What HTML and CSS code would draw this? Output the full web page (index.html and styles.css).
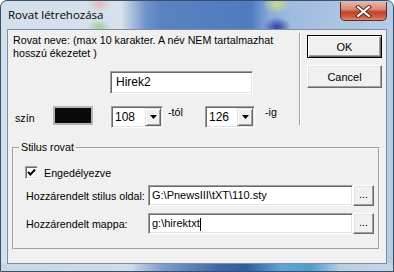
FILE: index.html
```html
<!DOCTYPE html>
<html>

<head>
    <title>Rovat létrehozása</title>
    <meta charset="utf-8">
    <link rel="stylesheet" href="styles.css">
</head>

<body>

    <div class="window">
        <div class="titlebar">
            <span class="title">Rovat létrehozása</span>
            <button class="close">
                <svg width="17" height="13" viewBox="0 0 17 13">
                    <path d="M3 2 L14 11 M14 2 L3 11" stroke="#5a2018" stroke-width="4" stroke-linecap="square" />
                    <path d="M3 2 L14 11 M14 2 L3 11" stroke="#ffffff" stroke-width="2" stroke-linecap="square" />
                </svg>
            </button>
        </div>

        <div class="client">
            <div class="top">
                <div class="main">
                    <p class="intro">Rovat neve: (max 10 karakter. A név NEM tartalmazhat<br>hosszú ékezetet )</p>
                    <div class="field name">Hirek2</div>

                    <div class="color-row">
                        <span class="lbl-szin">szín</span>
                        <span class="swatch"></span>
                        <div class="combo">
                            <span class="combo-text">108</span>
                            <span class="drop"><svg width="7" height="4" viewBox="0 0 7 4"><polygon points="0,0 7,0 3.5,4" fill="#000" /></svg></span>
                        </div>
                        <span class="suffix tol">-tól</span>
                        <div class="combo combo2">
                            <span class="combo-text">126</span>
                            <span class="drop"><svg width="7" height="4" viewBox="0 0 7 4"><polygon points="0,0 7,0 3.5,4" fill="#000" /></svg></span>
                        </div>
                        <span class="suffix ig">-ig</span>
                    </div>
                </div>

                <div class="sep"></div>

                <div class="buttons">
                    <button class="btn default">OK</button>
                    <button class="btn">Cancel</button>
                </div>
            </div>

            <div class="group">
                <span class="legend">Stilus rovat</span>

                <div class="check">
                    <span class="box">
                        <svg width="9" height="9" viewBox="0 0 9 9"><polyline points="1,4 3.5,6.5 8,1.5" fill="none" stroke="#000" stroke-width="2" /></svg>
                    </span>
                    <span>Engedélyezve</span>
                </div>

                <div class="row">
                    <span class="row-label">Hozzárendelt stilus oldal:</span>
                    <div class="field path">G:\PnewsIII\tXT\110.sty</div>
                    <button class="browse">...</button>
                </div>

                <div class="row">
                    <span class="row-label">Hozzárendelt mappa:</span>
                    <div class="field path">g:\hirektxt<span class="caret"></span></div>
                    <button class="browse">...</button>
                </div>
            </div>
        </div>
    </div>

</body></html>
```

FILE: styles.css
```css
body {
    margin: 0;
    background-color: #ffffff;
    font-family: "Liberation Sans", Arial, sans-serif;
    font-size: 10.7px;
    color: #000;
}

.window {
    width: 394px;
    height: 272px;
    box-sizing: border-box;
    border: 1px solid #3b4f69;
    border-radius: 7px 7px 0 0;
    padding: 0 6px 7px 6px;
    background:
        linear-gradient(to right, #c9d6e4 0, #cfdbe8 130px, #7f9fcf 160px, #3f6aaa 215px, #2f5c9c 245px, #5aa6d6 280px, #4f9ccf 310px, #b9cde3 340px, #c7d6e6 394px) bottom / 100% 8px no-repeat,
        radial-gradient(ellipse 12px 8px at 98px 3px, #e6b6b4, transparent),
        radial-gradient(ellipse 12px 8px at 98px 26px, #9fd09a, transparent),
        radial-gradient(ellipse 14px 10px at 276px 3px, #c9e08c, transparent),
        radial-gradient(ellipse 14px 10px at 276px 26px, #2c3fa8, transparent),
        linear-gradient(to right, #d3dfeb 0, #d6e1ec 120px, #6f93cb 145px, #5a82c2 160px, #4f7bbf 250px, #8aaad8 268px, #9fbbe0 290px, #acc4e2 340px, #b7cce5 394px);
}

.titlebar {
    height: 28px;
    display: flex;
    justify-content: space-between;
    align-items: flex-start;
}

.title {
    font-family: "Segoe UI", "Open Sans", sans-serif;
    font-size: 11.5px;
    margin: 6px 0 0 1px;
    color: #000;
}

.close {
    width: 47px;
    height: 19px;
    margin: 1px 0 0 0;
    padding: 0;
    border: 1px solid #5e2a24;
    border-top: none;
    border-radius: 0 0 5px 5px;
    background: linear-gradient(#eab3a2 0, #d98b78 40%, #c2432d 55%, #cf5a3f 80%, #e08a6a 100%);
    display: flex;
    align-items: center;
    justify-content: center;
}

.client {
    height: 233px;
    border: 1px solid #7d8ea3;
    background-color: #f0f0f0;
}

.top {
    display: flex;
    height: 117px;
}

.main {
    width: 291px;
}

.intro {
    margin: 4px 0 0 5px;
    line-height: 13px;
}

.field {
    background-color: #fff;
    box-sizing: border-box;
    border: 1px solid;
    border-color: #a0a0a0 #fff #fff #a0a0a0;
    box-shadow: inset 1px 1px 0 #696969, inset -1px -1px 0 #e3e3e3;
    white-space: nowrap;
    overflow: hidden;
}

.name {
    margin: 11px 0 0 102px;
    width: 143px;
    height: 23px;
    line-height: 21px;
    padding-left: 5px;
    font-size: 12px;
}

.color-row {
    display: flex;
    align-items: flex-start;
    margin-top: 12px;
}

.lbl-szin {
    width: 38px;
    margin: 6px 0 0 7px;
    line-height: 13px;
}

.swatch {
    width: 40px;
    height: 19px;
    box-sizing: border-box;
    background-color: #0a0a0a;
    border: 2px solid #b4b4b4;
}

.combo {
    display: flex;
    margin-left: 18px;
    width: 52px;
    height: 22px;
    box-sizing: border-box;
    background-color: #fff;
    border: 1px solid;
    border-color: #a0a0a0 #fff #fff #a0a0a0;
    box-shadow: inset 1px 1px 0 #696969, inset -1px -1px 0 #e3e3e3;
    padding: 1px;
}

.combo2 {
    margin-left: 0;
    width: 50px;
}

.combo-text {
    flex: 1;
    padding-left: 2px;
    line-height: 18px;
    font-size: 12px;
}

.drop {
    width: 16px;
    height: 18px;
    box-sizing: border-box;
    background-color: #f0f0f0;
    border: 1px solid;
    border-color: #e3e3e3 #696969 #696969 #e3e3e3;
    box-shadow: inset 1px 1px 0 #fff, inset -1px -1px 0 #a0a0a0;
    display: flex;
    align-items: center;
    justify-content: center;
}

.suffix {
    margin-left: 5px;
    line-height: 13px;
}

.tol {
    width: 37px;
}

.ig {
    margin-left: 10px;
}

.sep {
    width: 1px;
    height: 92px;
    margin-top: 3px;
    background-color: #a0a0a0;
    border-right: 1px solid #fff;
}

.buttons {
    margin-left: 6px;
    display: flex;
    flex-direction: column;
}

.btn {
    width: 75px;
    height: 23px;
    margin-top: 7px;
    padding: 0;
    font-family: "Liberation Sans", Arial, sans-serif;
    font-size: 11px;
    color: #000;
    background-color: #f0f0f0;
    border: 1px solid;
    border-color: #fff #696969 #696969 #fff;
    box-shadow: inset -1px -1px 0 #a0a0a0, inset 1px 1px 0 #e3e3e3;
}

.default {
    margin-top: 5px;
    border: 1px solid #000;
    box-shadow: inset 1px 1px 0 #fff, inset -1px -1px 0 #696969, inset -2px -2px 0 #a0a0a0;
}

/* group box, legend sits over the top border */
.group {
    position: relative;
    margin-left: 4px;
    width: 368px;
    height: 103px;
    box-sizing: border-box;
    border: 2px groove #f4f4f4;
    padding: 17px 0 0 12px;
}

.legend {
    position: absolute;
    top: -8px;
    left: 5px;
    padding: 0 2px;
    line-height: 13px;
    background-color: #f0f0f0;
}

.check {
    display: flex;
    align-items: center;
    height: 13px;
}

.box {
    width: 13px;
    height: 13px;
    box-sizing: border-box;
    background-color: #fff;
    border: 1px solid;
    border-color: #a0a0a0 #fff #fff #a0a0a0;
    box-shadow: inset 1px 1px 0 #696969, inset -1px -1px 0 #e3e3e3;
    display: flex;
    align-items: center;
    justify-content: center;
    margin: 0 6px 0 -1px;
}

.row {
    display: flex;
    align-items: center;
    margin-top: 7px;
}

.check + .row {
    margin-top: 6px;
}

.row-label {
    width: 122px;
    flex-shrink: 0;
    white-space: nowrap;
}

.path {
    width: 205px;
    height: 21px;
    line-height: 19px;
    padding-left: 3px;
    font-size: 11px;
}

.caret {
    display: inline-block;
    width: 1px;
    height: 13px;
    background-color: #000;
    vertical-align: middle;
}

.browse {
    width: 21px;
    height: 21px;
    padding: 0 0 4px 0;
    font-family: "Liberation Sans", Arial, sans-serif;
    font-size: 11px;
    line-height: 10px;
    color: #000;
    background-color: #f0f0f0;
    border: 1px solid;
    border-color: #fff #696969 #696969 #fff;
    box-shadow: inset -1px -1px 0 #a0a0a0, inset 1px 1px 0 #e3e3e3;
}
```
